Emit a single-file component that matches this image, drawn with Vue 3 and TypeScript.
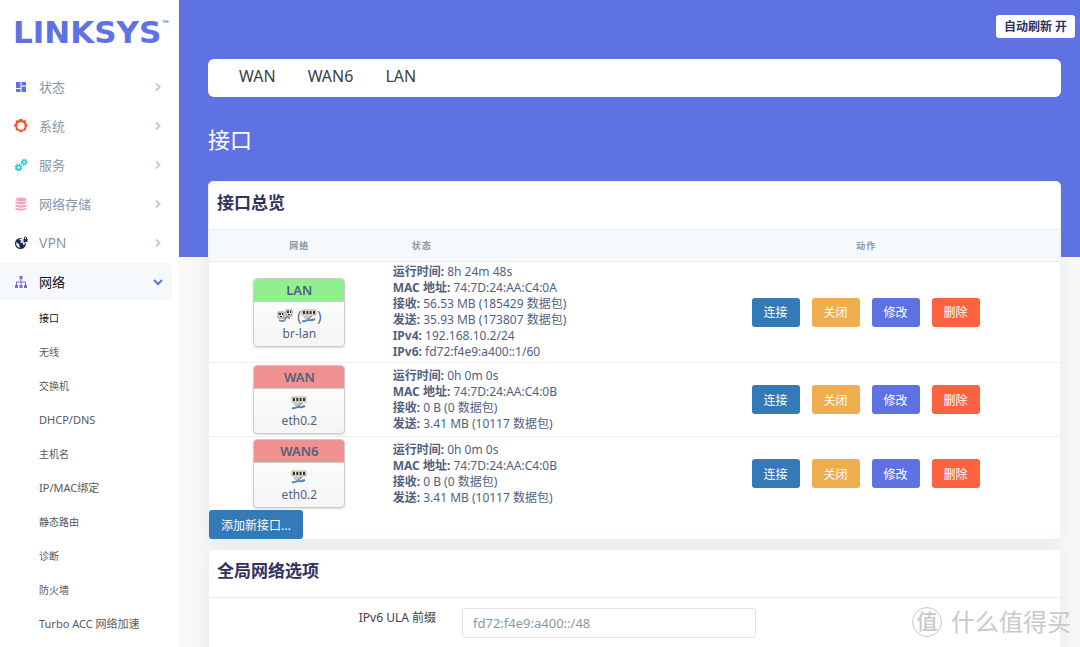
<script setup lang="ts">
import { ref } from 'vue'

interface MenuEntry {
  label: string
  icon: string
  open?: boolean
}
interface StatusLine {
  label: string
  value: string
}
interface NetRow {
  name: string
  up: boolean
  device: string
  bridge: boolean
  lines: StatusLine[]
}

const menu: MenuEntry[] = [
  { label: '状态', icon: 'status' },
  { label: '系统', icon: 'system' },
  { label: '服务', icon: 'services' },
  { label: '网络存储', icon: 'storage' },
  { label: 'VPN', icon: 'vpn' },
  { label: '网络', icon: 'network', open: true },
]
const submenu: string[] = [
  '接口', '无线', '交换机', 'DHCP/DNS', '主机名', 'IP/MAC绑定', '静态路由', '诊断', '防火墙', 'Turbo ACC 网络加速',
]
const tabs: string[] = ['WAN', 'WAN6', 'LAN']

const hasLatin = (text: string): boolean => /[A-Za-z]/.test(text)

const idleLines: StatusLine[] = [
  { label: '运行时间:', value: '0h 0m 0s' },
  { label: 'MAC 地址:', value: '74:7D:24:AA:C4:0B' },
  { label: '接收:', value: '0 B (0 数据包)' },
  { label: '发送:', value: '3.41 MB (10117 数据包)' },
]
const rows: NetRow[] = [
  {
    name: 'LAN',
    up: true,
    device: 'br-lan',
    bridge: true,
    lines: [
      { label: '运行时间:', value: '8h 24m 48s' },
      { label: 'MAC 地址:', value: '74:7D:24:AA:C4:0A' },
      { label: '接收:', value: '56.53 MB (185429 数据包)' },
      { label: '发送:', value: '35.93 MB (173807 数据包)' },
      { label: 'IPv4:', value: '192.168.10.2/24' },
      { label: 'IPv6:', value: 'fd72:f4e9:a400::1/60' },
    ],
  },
  { name: 'WAN', up: false, device: 'eth0.2', bridge: false, lines: idleLines },
  { name: 'WAN6', up: false, device: 'eth0.2', bridge: false, lines: idleLines },
]
const ula = ref('fd72:f4e9:a400::/48')
</script>

<template>
  <div class="layout">
    <svg class="defs" aria-hidden="true">
      <symbol id="ic-port" viewBox="0 0 16 14">
        <path d="M1 1h14v5H1z" fill="#ece6cf" stroke="#b0aea2" stroke-width="1" />
        <path d="M2 2h2v3H2zM5.300 2h2v3h-2zM8.600 2h2v3h-2zM12 2h2v3h-2z" fill="#34312a" />
        <path d="M2 7h10l-3 3H4z" fill="#c3c6cb" />
        <path d="M11 7l-4 3" stroke="#777b82" />
        <path d="M1 12c3 1 4-1 6-1s3 1 7-1" fill="none" stroke="#5b83b5" stroke-width="2" />
      </symbol>
      <symbol id="ic-bridge" viewBox="0 0 16 14">
        <path d="M1 3h6v6H1zM9 1h6v6H9z" fill="#e4e2d6" stroke="#8b8d8c" />
        <path d="M2 4h2v2H2zM5 4h1v2H5zM3 7h2v1H3zM10 2h2v2h-2zM13 2h1v2h-1zM11 5h2v1h-2z" fill="#34312a" />
        <path d="M2 11c3 2 6 1 6-1s2-2 5-1" fill="none" stroke="#6f8fb8" stroke-width="2" />
      </symbol>
    </svg>

    <aside class="sidebar">
      <a class="brand" href="#">LINKSYS<sup>™</sup></a>
      <nav>
        <ul class="menu">
          <li v-for="m in menu" :key="m.label">
            <a href="#" class="entry" :class="{ open: m.open }">
              <svg v-if="m.icon === 'status'" class="icon" viewBox="0 0 14 14" fill="#5e72e4">
                <path d="M2 2h4.500v6H2zM7.500 2H12v3.500H7.500zM2 9h4.500v3H2zM7.500 6.500H12V12H7.500z" />
              </svg>
              <svg v-else-if="m.icon === 'system'" class="icon" viewBox="0.600 0.400 12.900 12.900" fill="#fb4f2d">
                <path fill-rule="evenodd" d="M5.600 0.500h2.800l.4 1.500 1.500-.8 1.700 1.700-.7 1.500 1.700.5v2.800l-1.600.5.700 1.500-1.800 1.800-1.500-.8-.4 1.800H5.600l-.5-1.700-1.500.7-1.800-1.800.8-1.500-1.700-.5V4.900l1.700-.5L1.900 2.900l1.700-1.700 1.500.8zM7 3.400a3.400 3.400 0 1 0 0 6.800a3.400 3.400 0 1 0 0-6.800z" />
              </svg>
              <svg v-else-if="m.icon === 'services'" class="icon" viewBox="0 0 14 14" fill="none" stroke="#19c8e6">
                <circle cx="4.500" cy="9.500" r="2.100" stroke-width="1.500" />
                <circle cx="4.500" cy="9.500" r="3.300" stroke-width="1.200" stroke-dasharray="1.500 1.090" />
                <circle cx="10.200" cy="4.300" r="1.800" stroke-width="1.400" />
                <circle cx="10.200" cy="4.300" r="2.900" stroke-width="1.200" stroke-dasharray="1.300 .98" />
              </svg>
              <svg v-else-if="m.icon === 'storage'" class="icon" viewBox="0 0 14 14" fill="#f3a4b5">
                <ellipse cx="7" cy="2.500" rx="5.500" ry="2" />
                <path d="M1.500 4c2 1.600 9 1.600 11 0v2c-2 1.900-9 1.900-11 0zM1.500 7.200c2 1.600 9 1.600 11 0v2c-2 1.900-9 1.900-11 0zM1.500 10.400c2 1.600 9 1.600 11 0v1.500c-2 2.200-9 2.200-11 0z" />
              </svg>
              <svg v-else-if="m.icon === 'vpn'" class="icon" viewBox="0 0 14 14">
                <circle cx="6.500" cy="7.500" r="5.500" fill="#172b4d" />
                <path d="M2.300 6l3 2.500v1.700l1.200 1.500C3 11.500 2 9 2.300 6zM5 3.500l3-1.300v2L6.500 5.500v1.200H9V8l1 1.500c1.500-2 .8-3.500.8-3.500H8V1h5v6h-2z" fill="#fff" />
                <path d="M9.500 3h4v3h-4z" fill="#172b4d" />
                <path d="M10.500 3V1.800a1 1 0 0 1 2 0V3" fill="none" stroke="#172b4d" />
              </svg>
              <svg v-else class="icon" viewBox="0 0 14 14" fill="#8068d8">
                <path d="M5.500 1h3v3h-3zM1 10h3v3H1zM5.500 10h3v3h-3zM10 10h3v3h-3z" />
                <path d="M7 4v6M2.500 10V7h9v3" fill="none" stroke="#8068d8" />
              </svg>
              <span class="entry-label" :class="{ latin: hasLatin(m.label) }">{{ m.label }}</span>
              <svg class="chevron" viewBox="0 0 10 10" fill="none">
                <path :d="m.open ? 'M1 3l4 4 4-4' : 'M3 1.500l3.500 3.500-3.500 3.500'" />
              </svg>
            </a>
          </li>
        </ul>
        <ul class="submenu">
          <li v-for="(s, i) in submenu" :key="s">
            <a href="#" :class="{ active: i === 0, latin: hasLatin(s) }">{{ s }}</a>
          </li>
        </ul>
      </nav>
    </aside>

    <main class="content">
      <header class="topbar">
        <button type="button" class="refresh">自动刷新 开</button>
      </header>

      <nav class="tabs">
        <a v-for="t in tabs" :key="t" href="#">{{ t }}</a>
      </nav>

      <h1>接口</h1>

      <section class="card">
        <h2>接口总览</h2>
        <table>
          <thead>
            <tr>
              <th class="col-net">网络</th>
              <th class="col-status">状态</th>
              <th class="col-act">动作</th>
            </tr>
          </thead>
          <tbody>
            <tr v-for="r in rows" :key="r.name">
              <td>
                <div class="ifbox">
                  <div class="ifname" :class="r.up ? 'up' : 'down'">{{ r.name }}</div>
                  <div class="ifbody">
                    <div class="ificons">
                      <template v-if="r.bridge">
                        <svg><use href="#ic-bridge" /></svg>
                        <span>(</span><svg><use href="#ic-port" /></svg><span>)</span>
                      </template>
                      <svg v-else><use href="#ic-port" /></svg>
                    </div>
                    <div>{{ r.device }}</div>
                  </div>
                </div>
              </td>
              <td class="status">
                <div v-for="l in r.lines" :key="l.label"><strong>{{ l.label }}</strong> {{ l.value }}</div>
              </td>
              <td>
                <div class="actions">
                  <button type="button" class="btn blue">连接</button>
                  <button type="button" class="btn amber">关闭</button>
                  <button type="button" class="btn indigo">修改</button>
                  <button type="button" class="btn red">删除</button>
                </div>
              </td>
            </tr>
          </tbody>
        </table>
        <button type="button" class="btn blue add">添加新接口...</button>
      </section>

      <section class="card">
        <h2>全局网络选项</h2>
        <div class="field">
          <label for="ula">IPv6 ULA 前缀</label>
          <input id="ula" v-model="ula" type="text" />
        </div>
      </section>
    </main>

    <div class="watermark">
      <span class="seal">值</span>
      <span>什么值得买</span>
    </div>
  </div>
</template>

<style>
body {
  margin: 0;
  background: #f8f8f9;
}
</style>

<style scoped>
* {
  box-sizing: border-box;
}
.layout {
  display: flex;
  height: 100vh;
  overflow: hidden;
  font-family: "Noto Sans", "Noto Sans CJK SC", sans-serif;
  font-size: 12px;
  color: #525f7f;
}
.defs {
  position: absolute;
  width: 0;
  height: 0;
}
a {
  color: inherit;
  text-decoration: none;
}
ul {
  list-style: none;
  margin: 0;
  padding: 0;
}
button,
input {
  font-family: inherit;
}
.sidebar {
  flex: 0 0 179px;
  background: #fff;
}
.brand {
  display: flex;
  height: 68px;
  padding: 14px 0 0 13px;
  font: bold 31px/36px "DejaVu Sans", sans-serif;
  color: #5e72e4;
}
.brand sup {
  font-size: 9px;
  line-height: 20px;
}
.menu {
  display: grid;
  gap: 2px;
}
.entry {
  display: flex;
  align-items: center;
  height: 37px;
  margin-right: 7px;
  padding: 0 9px 0 14px;
  font-size: 13px;
  color: #8898aa;
}
.entry.open {
  background: #f6f9fc;
  color: #111;
  border-radius: 0 3px 3px 0;
}
.icon {
  width: 14px;
  height: 14px;
  margin-right: 11px;
}
.entry-label {
  flex: 1;
}
.entry-label.latin {
  font-size: 14px;
}
.chevron {
  width: 10px;
  height: 10px;
  stroke: #c5cbd3;
  stroke-width: 2;
}
.open .chevron {
  stroke: #5e72e4;
}
.submenu {
  padding-top: 1px;
}
.submenu a {
  display: block;
  height: 34px;
  padding-left: 39px;
  font-size: 10px;
  line-height: 34px;
  color: #595959;
}
.submenu a.latin {
  font-size: 11px;
}
.submenu a.active {
  color: #111;
}
.content {
  flex: 1;
  min-width: 0;
  padding: 0 19px 0 29px;
  background: linear-gradient(#5e72e4 257px, transparent 257px);
}
.topbar {
  display: flex;
  justify-content: flex-end;
  height: 59px;
  padding-top: 15px;
  margin-right: -14px;
}
.refresh {
  height: 23px;
  padding: 0 8px;
  border: 0;
  border-radius: 3px;
  background: #fff;
  color: #32325d;
  font-size: 12px;
  font-weight: 600;
  line-height: 22px;
  white-space: nowrap;
}
.tabs {
  display: flex;
  gap: 32px;
  height: 38px;
  padding: 0 31px;
  border-radius: 6px;
  background: #fff;
  color: #404040;
  font-size: 16px;
  line-height: 35px;
}
h1 {
  margin: 0 0 25px;
  padding-top: 26px;
  color: #fff;
  font-size: 22px;
  font-weight: 400;
  line-height: 33px;
}
.card {
  margin-bottom: 9px;
  border: 1px solid #f0f1f3;
  border-radius: 5px;
  background: #fff;
  box-shadow: 0 0 20px rgba(136, 152, 170, 0.15);
}
h2 {
  margin: 0;
  padding: 0 8px;
  height: 47px;
  color: #32325d;
  font-size: 17px;
  font-weight: 700;
  line-height: 42px;
}
table {
  width: 100%;
  border-collapse: collapse;
}
th {
  height: 32px;
  padding: 0;
  background: #f6f9fc;
  border-top: 1px solid #e9ecef;
  border-bottom: 1px solid #e9ecef;
  color: #8898aa;
  font-size: 9px;
  font-weight: 600;
  letter-spacing: 1px;
}
.col-net {
  width: 21%;
  padding-left: 2px;
}
.col-status {
  width: 33%;
  padding-left: 24px;
  text-align: left;
}
.col-act {
  padding-left: 4px;
}
td {
  padding: 2px 0;
  border-top: 1px solid #eceef1;
}
td:first-child {
  padding-left: 2px;
}
.status {
  padding-left: 5px;
  line-height: 16px;
}
.status div {
  height: 16px;
}
.ifbox {
  width: 92px;
  margin: 0 auto;
  overflow: hidden;
  border: 1px solid #ccc;
  border-radius: 4px;
  box-shadow: 0 1px 2px rgba(0, 0, 0, 0.15);
  background: linear-gradient(#fff, #f5f5f5);
  text-align: center;
}
.ifname {
  height: 23px;
  border-bottom: 1px solid #ccc;
  font-size: 13px;
  font-weight: 600;
  line-height: 23px;
}
.up {
  background: #90f090;
}
.down {
  background: #f09090;
}
.ifbody {
  height: 44px;
  padding-top: 5px;
  line-height: 18px;
}
.ificons {
  display: flex;
  justify-content: center;
  align-items: center;
  height: 18px;
  font-size: 14px;
}
.ificons svg {
  width: 16px;
  height: 14px;
}
.ificons svg + span {
  margin-left: 4px;
}
.ificons svg:last-of-type + span {
  margin-left: 0;
}
.actions {
  display: flex;
  gap: 12px;
  padding-left: 83px;
}
.btn {
  height: 29px;
  padding: 0 12px;
  border: 0;
  border-radius: 3px;
  color: #fff;
  font-size: 12px;
  white-space: nowrap;
}
.blue {
  background: #337ab7;
}
.amber {
  background: #f0ad4e;
}
.indigo {
  background: #5e72e4;
}
.red {
  background: #fb6340;
}
.add {
  display: block;
}
.field {
  display: flex;
  padding: 10px 0 24px;
  border-top: 1px solid #e9ecef;
}
.field label {
  width: 227px;
  margin-right: 26px;
  color: #404040;
  line-height: 20px;
  text-align: right;
}
.field input {
  width: 294px;
  height: 30px;
  padding: 0 10px;
  border: 1px solid #dee2e6;
  border-radius: 3px;
  background: #fff;
  color: #8898aa;
  font-size: 13px;
}
.watermark {
  position: absolute;
  right: 9px;
  bottom: 8px;
  display: flex;
  align-items: center;
  gap: 9px;
  color: #c9c9c9;
  font-size: 24px;
  line-height: 34px;
}
.seal {
  width: 30px;
  height: 30px;
  border: 1px solid #c9c9c9;
  border-radius: 50%;
  font-size: 21px;
  font-weight: 500;
  line-height: 27px;
  text-align: center;
}
</style>
